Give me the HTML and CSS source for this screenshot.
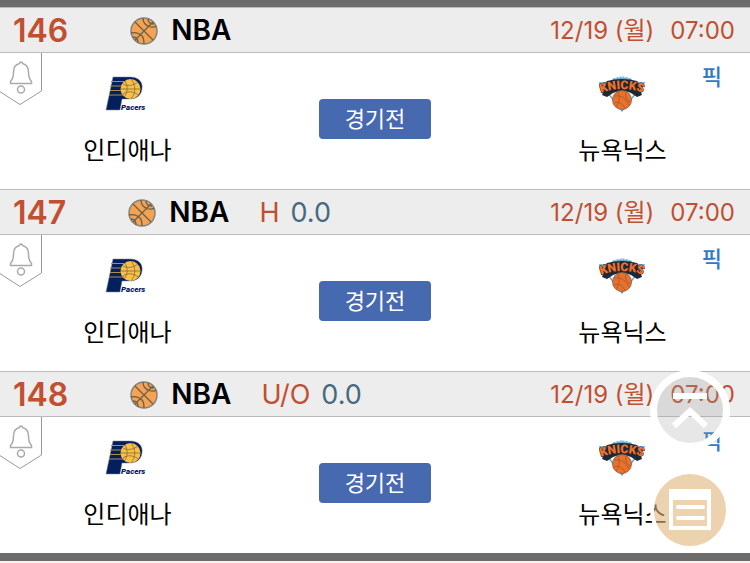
FILE: index.html
```html
<!DOCTYPE html>
<html lang="ko">
<head>
  <meta charset="UTF-8" />
  <meta name="viewport" content="width=device-width, initial-scale=1.0" />
  <title>NBA 경기 목록</title>
  <link rel="stylesheet" href="styles.css">
</head>
<body>
  <!-- shared icons -->
  <svg class="sprite" aria-hidden="true">
    <symbol id="ball" viewBox="0 0 28 28">
      <circle cx="14" cy="14" r="13" fill="#f4a253" stroke="#85837c" stroke-width="1.5" />
      <g fill="none" stroke="#6b6049" stroke-width="1.3">
        <path d="M5 5L23 23M23 5L5 23" />
        <path d="M13 1C13 5 15 8 19 9.500C22 10.500 25 10 26 9" />
        <path d="M18 2C18 5 20 7 24 7" />
        <path d="M1 16C5 15 9 16 12 19C14 21 14 24 14 27" />
        <path d="M3 20C6 20 8 22 8 26" />
      </g>
    </symbol>
    <symbol id="bell" viewBox="0 0 43 53">
      <path d="M41.500 -1V38L20 51.500L-1 38" fill="#fff" stroke="#999" />
      <g fill="none" stroke="#aaa" stroke-width="1.500">
        <path d="M19.500 10.500C19.500 8.500 22.500 8.500 22.500 10.500C27 11.500 28.500 15 28.500 19C28.500 25 29.500 26.500 31.500 28.500V30.500H10.500V28.500C12.500 26.500 13.500 25 13.500 19C13.500 15 15 11.500 19.500 10.500Z" />
        <circle cx="21" cy="36.500" r="3.500" />
      </g>
    </symbol>
    <symbol id="pacers" viewBox="0 0 44 38">
      <path d="M8 2H25C34 2 38 7 37 14C36 21 31 24 24 24H17L15 35H1Z" fill="#04205c" stroke="#7d8494" stroke-width=".5" />
      <circle cx="25.500" cy="14" r="10" fill="#fbbf45" />
      <path d="M6 6.500H20M5 11H16M5 15.500H16M4 20H19" stroke="#a98d55" />
      <path d="M16 14H35M18 9C23 12 29 10 33 7M18 19C23 15 30 17 33 20M26 4C31 10 31 18 26 24M20 6C23 11 23 18 19 22" fill="none" stroke="#6f6540" stroke-width=".7" />
    </symbol>
    <symbol id="knicks" viewBox="0 0 46 38">
      <path d="M1 8H45L23 36Z" fill="#f1f7fb" stroke="#5ba0cf" stroke-width="1.300" />
      <path d="M13 4Q23 -1 33 4L31 8H15Z" fill="#65a9d5" />
      <path d="M16 3.500Q23 1 30 3.500" fill="none" stroke="#c9e1ef" stroke-dasharray="2 1" />
      <path d="M8 6Q23 2 38 6L43 20L38 22L32 18Q23 14 14 18L8 22L3 20Z" fill="#1d2a35" />
      <path id="knicks-arc" d="M2 18Q23 10 45 18" fill="none" />
      <circle cx="23" cy="25" r="9.500" fill="#e8722b" stroke="#8a5b41" stroke-width=".8" />
      <path d="M15 21Q25 19 30 30M19 16Q22 26 17 32M27 16Q25 25 32 27M15 28Q21 25 26 33" fill="none" stroke="#a8562c" stroke-width=".8" />
    </symbol>
  </svg>

  <main class="game-list">
    <section class="game">
      <header class="game-head">
        <span class="num">146</span>
        <svg class="ball"><use href="#ball" /></svg>
        <span class="league">NBA</span>
        <time class="date">12/19 (월)</time>
        <time class="hour">07:00</time>
      </header>
      <div class="game-body">
        <button class="alarm" type="button" aria-label="알림"><svg><use href="#bell" /></svg></button>
        <div class="team">
          <svg class="pacers"><use href="#pacers" /><text x="16" y="35">Pacers</text></svg>
          <span>인디애나</span>
        </div>
        <button class="status" type="button">경기전</button>
        <div class="team">
          <svg class="knicks"><use href="#knicks" /><text><textPath href="#knicks-arc">KNICKS</textPath></text></svg>
          <span>뉴욕닉스</span>
        </div>
        <a class="pick" href="#">픽</a>
      </div>
    </section>

    <section class="game">
      <header class="game-head">
        <span class="num">147</span>
        <svg class="ball"><use href="#ball" /></svg>
        <span class="league">NBA</span>
        <span class="type">H</span>
        <span class="line">0.0</span>
        <time class="date">12/19 (월)</time>
        <time class="hour">07:00</time>
      </header>
      <div class="game-body">
        <button class="alarm" type="button" aria-label="알림"><svg><use href="#bell" /></svg></button>
        <div class="team">
          <svg class="pacers"><use href="#pacers" /><text x="16" y="35">Pacers</text></svg>
          <span>인디애나</span>
        </div>
        <button class="status" type="button">경기전</button>
        <div class="team">
          <svg class="knicks"><use href="#knicks" /><text><textPath href="#knicks-arc">KNICKS</textPath></text></svg>
          <span>뉴욕닉스</span>
        </div>
        <a class="pick" href="#">픽</a>
      </div>
    </section>

    <section class="game">
      <header class="game-head">
        <span class="num">148</span>
        <svg class="ball"><use href="#ball" /></svg>
        <span class="league">NBA</span>
        <span class="type">U/O</span>
        <span class="line">0.0</span>
        <time class="date">12/19 (월)</time>
        <time class="hour">07:00</time>
      </header>
      <div class="game-body">
        <button class="alarm" type="button" aria-label="알림"><svg><use href="#bell" /></svg></button>
        <div class="team">
          <svg class="pacers"><use href="#pacers" /><text x="16" y="35">Pacers</text></svg>
          <span>인디애나</span>
        </div>
        <button class="status" type="button">경기전</button>
        <div class="team">
          <svg class="knicks"><use href="#knicks" /><text><textPath href="#knicks-arc">KNICKS</textPath></text></svg>
          <span>뉴욕닉스</span>
        </div>
        <a class="pick" href="#">픽</a>
      </div>
    </section>
  </main>

  <div class="floating">
    <button class="float-btn to-top" type="button" aria-label="맨 위로">
      <svg viewBox="0 0 66 66" fill="none" stroke="#fff" stroke-width="6">
        <path d="M16 19H50M17 49L33 34L49 49" />
      </svg>
    </button>
    <button class="float-btn menu" type="button" aria-label="메뉴">
      <svg viewBox="0 0 72 72">
        <path d="M15 15H57V56H15Z" fill="#fff" />
        <path d="M19 26H53V52H19Z" fill="#edd3b0" />
        <path d="M24 33H49M24 44H49" stroke="#fff" stroke-width="4" stroke-linecap="round" />
      </svg>
    </button>
  </div>
</body>
</html>
```
FILE: styles.css
```css
* {
  box-sizing: border-box;
}
body {
  margin: 0;
  background-color: #f6f3ea;
  color: #000;
  font-family: Inter, "Noto Sans CJK KR", sans-serif;
}
button {
  padding: 0;
  border: none;
  font-family: inherit;
  cursor: pointer;
}
svg {
  display: block;
}
.sprite {
  position: absolute;
  width: 0;
  height: 0;
}
.game-list {
  border-top: 7px solid #6c6c6c;
  border-bottom: 8px solid #6c6c6c;
  background-color: #fff;
}

/* title row */
.game-head {
  display: flex;
  align-items: center;
  height: 46px;
  padding: 1px 15px 0 13px;
  border-top: 1px solid #bbb;
  border-bottom: 1px solid #bbb;
  background-color: #ededed;
  line-height: 33px;
  white-space: nowrap;
}
.num {
  color: #c14f31;
  font-size: 32px;
  font-weight: 600;
}
.ball {
  width: 28px;
  height: 28px;
  margin-left: 62px;
}
.league {
  margin-left: 13px;
  font-size: 28px;
  font-weight: 600;
}
.type {
  margin-left: 30px;
  color: #c14f31;
  font-size: 27px;
}
.line {
  margin-left: 11px;
  color: #456a7e;
  font-size: 27px;
}
.date,
.hour {
  color: #c14f31;
  font-size: 24px;
}
.date {
  margin-left: auto;
}
.hour {
  margin-left: 16px;
}

/* teams */
.game-body {
  position: relative;
  display: grid;
  grid-template-columns: 34% 32% 34%;
  align-items: start;
  justify-items: center;
  height: 136px;
}
.alarm {
  position: absolute;
  top: 0;
  left: 0;
  background: none;
}
.alarm svg {
  width: 43px;
  height: 53px;
}
.team {
  display: flex;
  flex-direction: column;
  align-items: center;
  padding-top: 22px;
  font-size: 24px;
  line-height: 36px;
}
.team svg {
  height: 38px;
  margin-bottom: 20px;
}
.pacers {
  width: 44px;
}
.knicks {
  width: 46px;
}
.pacers text {
  fill: #04205c;
  stroke: #fff;
  stroke-width: 1px;
  paint-order: stroke;
  font: italic 900 8px Roboto, sans-serif;
}
.knicks text {
  fill: #ef7028;
  stroke: #1d2a35;
  stroke-width: 1px;
  paint-order: stroke;
  font: 900 12px Roboto, sans-serif;
}
.status {
  width: 112px;
  height: 40px;
  margin-top: 46px;
  padding-bottom: 4px;
  border-radius: 4px;
  background-color: #4769b0;
  color: #fff;
  font-size: 22px;
}
.pick {
  position: absolute;
  top: 8px;
  right: 28px;
  color: #2f7acb;
  font-size: 22px;
  font-weight: 500;
  line-height: 32px;
  text-decoration: none;
}

/* floating buttons */
.floating {
  position: fixed;
  right: 20px;
  bottom: 13px;
  display: flex;
  flex-direction: column;
  gap: 20px;
}
.float-btn {
  width: 80px;
  height: 80px;
  border: 4px solid #fff;
  border-radius: 50%;
}
.to-top {
  border-width: 7px;
  background-color: rgba(160, 160, 160, 0.25);
}
.menu {
  background-color: rgba(225, 180, 123, 0.6);
}
```
